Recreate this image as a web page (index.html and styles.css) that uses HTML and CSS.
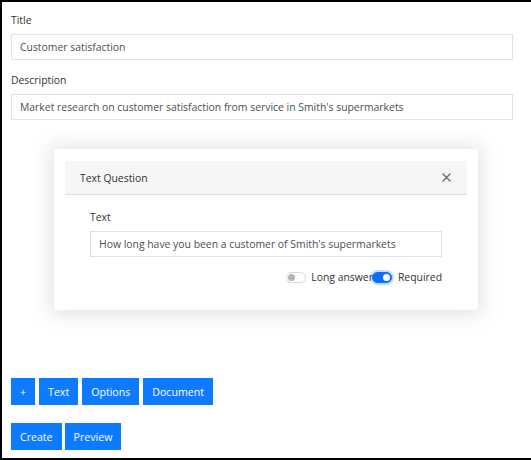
FILE: index.html
```html
<!DOCTYPE html>
<html>
<head>
<meta charset="utf-8">
<link rel="stylesheet" href="styles.css">
</head>
<body>
<div class="page">
  <div class="group">
    <label class="lbl">Title</label>
    <div class="input">Customer satisfaction</div>
  </div>
  <div class="group">
    <label class="lbl">Description</label>
    <div class="input">Market research on customer satisfaction from service in Smith's supermarkets</div>
  </div>

  <div class="modal">
    <div class="modal-head">
      <span class="modal-title">Text Question</span>
      <svg class="close" width="9" height="9" viewBox="0 0 9 9"><path d="M1 1L8 8M8 1L1 8" stroke="#6b6b6b" stroke-width="1.4" stroke-linecap="round"/></svg>
    </div>
    <div class="modal-body">
      <label class="lbl">Text</label>
      <div class="input">How long have you been a customer of Smith's supermarkets</div>
      <div class="switches">
        <span class="switch off"><span class="knob"></span></span>
        <span class="sw-label">Long answer</span>
        <span class="switch on"><span class="knob"></span></span>
        <span class="sw-label req">Required</span>
      </div>
    </div>
  </div>

  <div class="btn-row first">
    <button class="btn">+</button>
    <button class="btn">Text</button>
    <button class="btn">Options</button>
    <button class="btn">Document</button>
  </div>
  <div class="btn-row second">
    <button class="btn">Create</button>
    <button class="btn">Preview</button>
  </div>
</div>
</body>
</html>
```

FILE: styles.css
```css
html, body {
  margin: 0;
  padding: 0;
  background: #fff;
}
body {
  font-family: "Open Sans", "Noto Sans", sans-serif;
  font-size: 10.4px;
  color: #212529;
}
.page {
  box-sizing: border-box;
  width: 531px;
  height: 460px;
  border-left: 2px solid #000;
  border-top: 2px solid #000;
  border-bottom: 2px solid #000;
  padding: 9px 18px 0 9px;
}
.group {
  margin-bottom: 11px;
}
.lbl {
  display: block;
  line-height: 18px;
  margin-bottom: 5px;
  color: #333;
}
.input {
  box-sizing: border-box;
  height: 26px;
  border: 1px solid #dfe3e8;
  padding: 0 8px;
  line-height: 24px;
  color: #495057;
  white-space: nowrap;
}
.modal {
  margin: 29px 0 0 43px;
  width: 424px;
  box-sizing: border-box;
  padding: 12px 11px 0 11px;
  height: 161px;
  background: #fff;
  box-shadow: 0 1px 18px 5px rgba(0,0,0,0.10);
  border-radius: 2px;
}
.modal-head {
  height: 34px;
  box-sizing: border-box;
  background: #f6f6f6;
  border-bottom: 1px solid #dcdfe3;
  display: flex;
  align-items: center;
  justify-content: space-between;
  padding: 0 16px 0 15px;
}
.modal-title {
  color: #333;
}
.close { display: block; }
.modal-body {
  padding: 13px 25px 0 25px;
}
.switches {
  display: flex;
  align-items: center;
  justify-content: flex-end;
  margin-top: 11px;
  height: 18px;
}
.switch {
  position: relative;
  box-sizing: border-box;
  width: 20px;
  height: 11px;
  border-radius: 6px;
}
.switch.off {
  background: #fff;
  border: 1px solid #d3d6da;
  margin-right: 5px;
}
.switch.off .knob {
  position: absolute;
  left: 1px;
  top: 1px;
  width: 7px;
  height: 7px;
  border-radius: 50%;
  background: #b2b6bb;
}
.switch.on {
  background: #0d6efd;
  border: 1px solid #0d6efd;
  box-shadow: 0 0 0 2px rgba(13,110,253,0.25);
  margin-left: -1px;
  margin-right: 6px;
}
.switch.on .knob {
  position: absolute;
  right: 1px;
  top: 1px;
  width: 7px;
  height: 7px;
  border-radius: 50%;
  background: #fff;
}
.sw-label {
  color: #333;
}
.btn-row {
  display: flex;
  gap: 4px;
  margin-top: 18px;
}
.btn-row.first {
  margin-top: 68px;
}
.btn-row.second {
  gap: 3px;
}
.btn {
  font-family: inherit;
  font-size: 10.6px;
  color: #fff;
  background: #0d7bff;
  border: none;
  border-radius: 0;
  height: 27px;
  padding: 0 9px;
  margin: 0;
}
```
